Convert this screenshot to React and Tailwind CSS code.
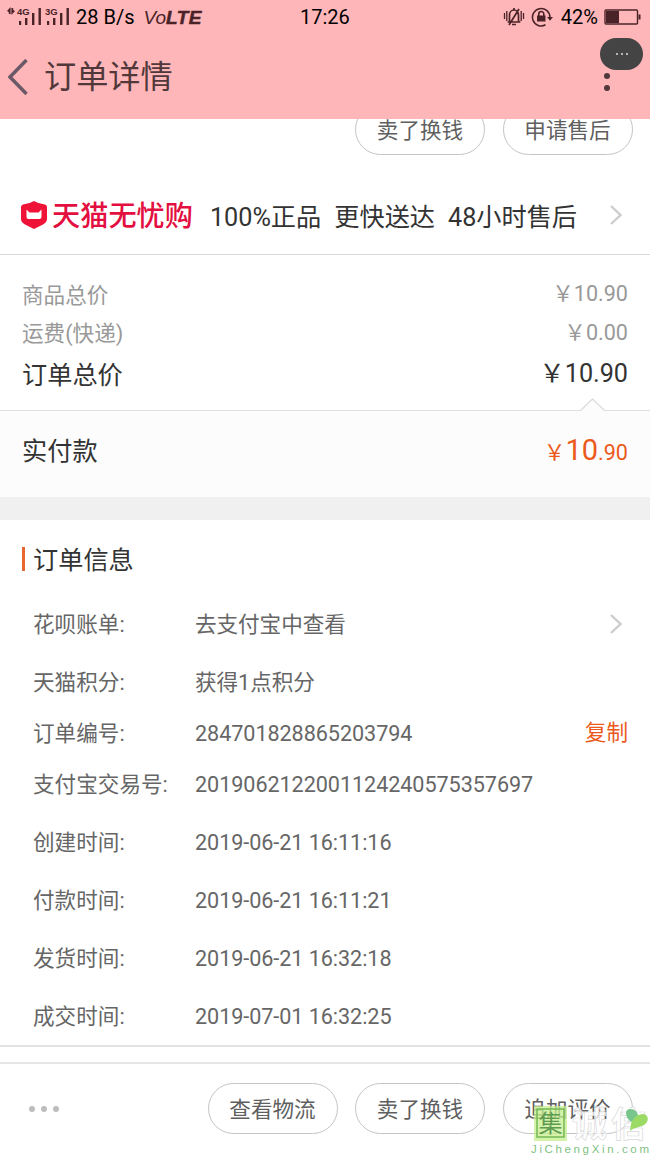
import React from "react";

// ================= DATA =================
const ORDER_INFO = [
  { label: "花呗账单:", value: "去支付宝中查看", height: "h-[58px]", arrow: true },
  { label: "天猫积分:", value: "获得1点积分", height: "h-[58px]" },
  { label: "订单编号:", value: "284701828865203794", height: "h-[43px]", copy: true },
  { label: "支付宝交易号:", value: "2019062122001124240575357697", height: "h-[59px]" },
  { label: "创建时间:", value: "2019-06-21 16:11:16", height: "h-[57px]" },
  { label: "付款时间:", value: "2019-06-21 16:11:21", height: "h-[59px]" },
  { label: "发货时间:", value: "2019-06-21 16:32:18", height: "h-[58px]" },
  { label: "成交时间:", value: "2019-07-01 16:32:25", height: "h-[58px]" },
];

// ================= ICONS =================
const Signal = ({ label }) => (
  <svg width="24" height="20" viewBox="0 0 24 20" fill="#4a2328" className="overflow-visible">
    <text x="-1" y="7.5" fontSize="9.5" fontWeight="bold" fontFamily="Liberation Sans, sans-serif">{label}</text>
    <rect x="1" y="14" width="2.2" height="4" />
    <rect x="7" y="11" width="2.4" height="7" />
    <rect x="14" y="6" width="2.4" height="12" />
    <rect x="20.5" y="1" width="2.4" height="17" />
  </svg>
);

const MuteBell = () => (
  <svg width="22" height="20" viewBox="0 0 22 20" fill="none" stroke="#4a2328" strokeWidth="1.7">
    <path d="M1.5 6v6M3.8 4v10M18.2 4v10M20.5 6v6" strokeWidth="1.3" />
    <path d="M6.5 14.5V8a4.5 5 0 0 1 9 0v6.5M4.6 15h12.8M11 1v2M6 18 16 2M9 17.5h4" />
  </svg>
);

const RotationLock = () => (
  <svg width="23" height="20" viewBox="0 0 23 20" fill="none" stroke="#4a2328" strokeWidth="1.6">
    <path d="M18.9 10A8.7 8.7 0 1 0 14.5 17.8" />
    <path d="M16 10h6l-3 3.7z" fill="#4a2328" stroke="none" />
    <path d="M6 8.5h8.5v6H6z" fill="#4a2328" stroke="none" />
    <path d="M7.8 9V7a2.5 2.5 0 0 1 5 0v2" />
  </svg>
);

const Battery = () => (
  <svg width="37" height="16" viewBox="0 0 37 16" fill="#4a2328">
    <rect x="1" y="1" width="32.5" height="14" rx="1" fill="none" stroke="#4a2328" strokeWidth="1.4" />
    <rect x="2" y="2" width="13" height="12" />
    <rect x="34.5" y="5.5" width="2" height="5" />
  </svg>
);

const Chevron = () => (
  <svg width="12" height="20" viewBox="0 0 12 20" fill="none" stroke="#cdcdcd" strokeWidth="2.4">
    <path d="m1 1 9.5 9L1 19" />
  </svg>
);

const Shield = () => (
  <svg width="26" height="28" viewBox="0 0 26 28">
    <path d="M13 0Q18 3 24 3.5 26 4 26 6v12q0 3-4 5.500L13 28 4 23.500Q0 21 0 18V6q0-2 2-2.500Q8 3 13 0z" fill="#ee1337" />
    <path d="M5.5 8.500 8.500 11.500h9L20.500 8.500v7.500q0 2-2 2h-11q-2 0-2-2z" fill="#fff" />
  </svg>
);

const PillButton = ({ children }) => (
  <button className="flex h-[51px] w-[130px] items-center justify-center rounded-full border border-[#c4c4c4] pt-[2px] text-[21.6px] text-[#5f5f5f]">
    {children}
  </button>
);

const Price = ({ amount }) => <span>￥{amount}</span>;

// ================= WATERMARK =================
const Watermark = () => (
  <div className="absolute top-[1104px] left-[530px] h-[51px] w-[120px] overflow-hidden">
    <svg width="120" height="51" viewBox="0 0 120 51" fontFamily="Noto Sans CJK SC, sans-serif">
      <rect x="4" y="2" width="33" height="35" fill="#c5ee8c" opacity="0.75" />
      <rect x="7" y="5" width="27" height="28" fill="none" stroke="#75b957" strokeWidth="1.5" />
      <text x="8.5" y="28" fontSize="24" fill="#5e9a52">集</text>
      <text x="42" y="33" fontSize="35" fontWeight="bold" fill="#fff" fillOpacity="0.75" stroke="#dadada" strokeWidth="0.7">诚</text>
      <text x="81" y="33" fontSize="35" fontWeight="bold" fill="#fff" fillOpacity="0.75" stroke="#dadada" strokeWidth="0.7">信</text>
      <path d="M101 18C94 12 95 5 100 5c6 0 9 5 8 9z" fill="#78c68c" />
      <path d="M101 20c2-6 6-10 13-10 6 2 4 9 0 11-4 2-11 3-14 6z" fill="#9bda65" />
      <text x="1" y="49" fontSize="11.5" fontFamily="Liberation Sans, sans-serif" textLength="118" fill="#7fbf83">JiChengXin.com</text>
    </svg>
  </div>
);

// ================= APP =================
export default function App() {
  return (
    <div className="relative flex h-[1155px] w-[650px] flex-col overflow-hidden bg-white font-['Roboto','Noto_Sans_CJK_SC',sans-serif] leading-none text-[#666]">
      {/* Header */}
      <header className="relative z-10 h-[119px] shrink-0 bg-[#ffb6b9]">
        <div className="grid h-[34px] grid-cols-[300px_1fr_auto] items-center pr-[9px] pl-[7px] text-[20px] text-black">
          <div className="flex items-center whitespace-nowrap">
            <svg width="8" height="8" viewBox="0 0 8 8" className="mb-3" fill="#4a2328">
              <path d="M3.600 0v7H1.800V5L0 4zM4.400 8V1h1.800v2L8 4z" />
            </svg>
            <span className="ml-[3px] flex gap-[4px]">
              <Signal label="4G" />
              <Signal label="3G" />
            </span>
            <span className="ml-[6px]">28 B/s</span>
            <span className="ml-[9px] flex items-center pt-[1px] font-['Liberation_Sans',sans-serif] text-[19px] text-[#4a2328] italic">
              Vo<b className="tracking-[0.4px] [-webkit-text-stroke:0.5px_#4a2328]">LTE</b>
            </span>
          </div>
          <span className="-ml-[7px]">17:26</span>
          <div className="flex items-center">
            <MuteBell />
            <span className="ml-[6px]"><RotationLock /></span>
            <span className="ml-[7px]">42%</span>
            <span className="ml-[6px]"><Battery /></span>
          </div>
        </div>
        <div className="flex h-[85px] items-center pl-[8px]">
          <svg width="20" height="36" viewBox="0 0 20 36" fill="none" stroke="#6a5966" strokeWidth="3.5">
            <path d="M18.5 1 2 18l16.5 17" />
          </svg>
          <h1 className="ml-[16px] pt-[2px] text-[32.2px] font-normal text-[#50383b]">订单详情</h1>
        </div>
        <div className="absolute top-[73px] left-[604px] flex flex-col gap-[6px]">
          <i className="size-[6px] rounded-full bg-[#50383b]" />
          <i className="size-[6px] rounded-full bg-[#50383b]" />
        </div>
        <div className="absolute top-[38px] left-[600px] flex h-[32px] w-[43px] items-center justify-center gap-[3px] rounded-full bg-[#444]">
          <i className="size-[2px] rounded-full bg-[#ddd]" />
          <i className="size-[2px] rounded-full bg-[#ddd]" />
          <i className="size-[2px] rounded-full bg-[#ddd]" />
        </div>
      </header>

      {/* Item actions, scrolled under the header */}
      <div className="-mt-[15px] flex shrink-0 justify-end gap-[17.5px] pr-[17.5px]">
        <PillButton>卖了换钱</PillButton>
        <PillButton>申请售后</PillButton>
      </div>

      {/* Tmall guarantee */}
      <div className="mt-[22px] flex h-[78px] shrink-0 items-center border-b border-[#d9d9d9] pr-[28px] pb-[1px] pl-[21px] text-[25.2px] whitespace-nowrap text-[#333]">
        <Shield />
        <span className="mt-[4px] ml-[5px] text-[28.2px] font-medium text-[#e30f40]">天猫无忧购</span>
        <span className="mt-[5px] ml-[17px]">100%正品</span>
        <span className="mt-[5px] ml-[13px]">更快送达</span>
        <span className="mt-[5px] ml-[13px]">48小时售后</span>
        <span className="ml-auto"><Chevron /></span>
      </div>

      {/* Totals */}
      <section className="h-[155px] shrink-0 px-[22px] pt-[20px] text-[21.6px] text-[#999]">
        <div className="flex h-[38px] items-center justify-between">
          <span className="pt-[3px]">商品总价</span>
          <Price amount="10.90" />
        </div>
        <div className="flex h-[40px] items-center justify-between">
          <span className="pt-[2px]">运费(快递)</span>
          <Price amount="0.00" />
        </div>
        <div className="flex h-[42px] items-center justify-between text-[25.2px] text-[#333]">
          <span className="pt-[3px]">订单总价</span>
          <Price amount="10.90" />
        </div>
      </section>

      {/* Actual payment */}
      <section className="relative flex h-[87px] shrink-0 items-center justify-between border-t border-[#e0e0e0] bg-[#fcfcfc] px-[22px] pb-[6px]">
        <svg className="absolute -top-[13px] left-[580px]" width="25" height="14" viewBox="0 0 25 14" fill="#fcfcfc" stroke="#dedede" strokeWidth="1.4">
          <path d="M0 13 12.5 1 25 13" />
        </svg>
        <span className="pt-[2px] text-[25.2px] text-[#333]">实付款</span>
        <span className="-mt-[2px] text-[21.6px] text-[#eb5a1c]">
          ￥<span className="text-[29px]">10</span>.90
        </span>
      </section>

      <div className="h-[23px] shrink-0 bg-[#f0f0f0]" />

      {/* Order info */}
      <section className="h-[527px] shrink-0 border-b-2 border-[#e2e2e2] text-[21.6px]">
        <div className="flex h-[75px] items-center gap-[8px] pl-[22px] text-[25.2px] text-[#333]">
          <i className="mt-[2px] h-[24px] w-[3px] bg-[#e8662f]" />
          <h2 className="pt-[6px]">订单信息</h2>
        </div>
        {ORDER_INFO.map((row) => (
          <div key={row.label} className={`flex items-center pr-[22px] pl-[33px] ${row.height}`}>
            <span className="w-[162px] pt-[2px]">{row.label}</span>
            <span className="pt-[2px] tracking-[-0.06px]">{row.value}</span>
            {row.copy && <button className="ml-auto pt-[1px] text-[#eb5a1c]">复制</button>}
            {row.arrow && <span className="mr-[6px] ml-auto"><Chevron /></span>}
          </div>
        ))}
      </section>

      {/* Bottom bar */}
      <footer className="mt-[15px] flex h-[94px] shrink-0 items-center border-t-2 border-[#e5e5e5] pr-[17.5px] pb-[3px] pl-[29px]">
        <div className="flex gap-[6px]">
          <i className="size-[6px] rounded-full bg-[#bdbdbd]" />
          <i className="size-[6px] rounded-full bg-[#bdbdbd]" />
          <i className="size-[6px] rounded-full bg-[#bdbdbd]" />
        </div>
        <div className="ml-auto flex gap-[17.5px]">
          <PillButton>查看物流</PillButton>
          <PillButton>卖了换钱</PillButton>
          <PillButton>追加评价</PillButton>
        </div>
      </footer>
      <Watermark />
    </div>
  );
}
